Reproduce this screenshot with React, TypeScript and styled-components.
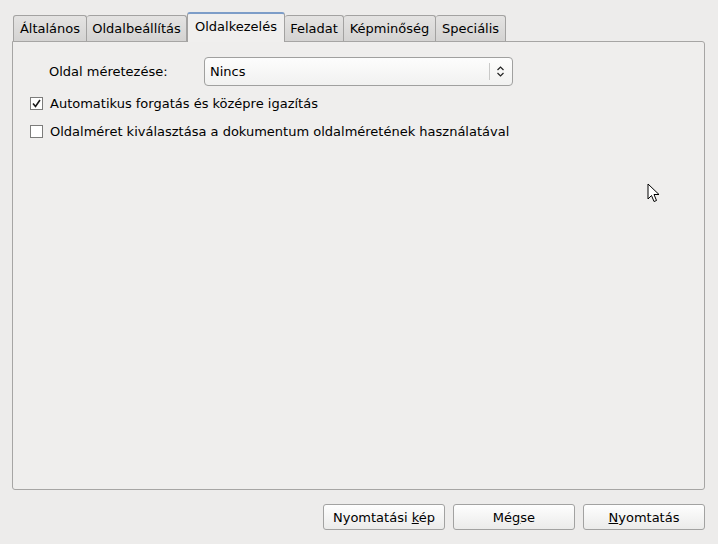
import React from "react";
import styled, { createGlobalStyle, css } from "styled-components";

const GlobalStyle = createGlobalStyle`
  html, body {
    margin: 0;
    padding: 0;
    background: #edeceb;
  }
  body {
    font-family: "DejaVu Sans", "Noto Sans", sans-serif;
    font-size: 13px;
    color: #000;
  }
`;

const Window = styled.div`
  position: relative;
  box-sizing: border-box;
  width: 718px;
  height: 544px;
  padding: 12px 13px 14px 12px;
  display: flex;
  flex-direction: column;
  background: #edeceb;
  overflow: hidden;
`;

const TabBar = styled.div`
  display: flex;
  align-items: flex-end;
  height: 29px;
  padding-left: 1px;
  position: relative;
  z-index: 1;
`;

const Tab = styled.div<{ $active?: boolean; $width: number }>`
  box-sizing: border-box;
  width: ${(p) => p.$width}px;
  height: 26px;
  display: flex;
  align-items: center;
  justify-content: center;
  border: 1px solid #a3a2a1;
  border-left: none;
  border-bottom: none;
  border-radius: 3px 3px 0 0;
  background: linear-gradient(#e4e3e2, #d4d3d2);
  white-space: nowrap;

  &:first-child {
    border-left: 1px solid #a3a2a1;
  }

  ${(p) =>
    p.$active &&
    css`
      height: 30px;
      margin-bottom: -1px;
      padding-bottom: 3px;
      border: 1px solid #a3a2a1;
      border-top: 2px solid #7d9dc8;
      border-bottom: none;
      background: #f0efee;
    `}
`;

const Panel = styled.div`
  flex: 1;
  border: 1px solid #a6a5a4;
  border-radius: 0 3px 3px 3px;
  background: #efeeed;
  padding: 15px 0 0 17px;
  display: flex;
  flex-direction: column;
`;

const FieldRow = styled.div`
  display: flex;
  align-items: center;
  height: 29px;
  margin-bottom: 3px;
`;

const FieldLabel = styled.span`
  width: 155px;
  padding-left: 19px;
`;

const Combo = styled.div`
  box-sizing: border-box;
  width: 309px;
  height: 29px;
  display: flex;
  align-items: center;
  border: 1px solid #a0a09f;
  border-radius: 4px;
  background: linear-gradient(#fdfdfd, #f1f1f0);
  padding-left: 5px;
`;

const ComboText = styled.span`
  flex: 1;
`;

const ComboSep = styled.span`
  width: 1px;
  height: 17px;
  background: #c9c9c8;
  margin-right: 6px;
`;

const ComboArrow = styled.svg`
  width: 9px;
  height: 13px;
  margin-right: 7px;
`;

const CheckRow = styled.label`
  display: flex;
  align-items: center;
  height: 28px;
  gap: 7px;
`;

const Box = styled.span`
  box-sizing: border-box;
  width: 13px;
  height: 13px;
  border: 1px solid #7c7c7b;
  background: #fff;
  display: flex;
  align-items: center;
  justify-content: center;
`;

const Buttons = styled.div`
  display: flex;
  justify-content: flex-end;
  gap: 8px;
  margin-top: 14px;
`;

const Button = styled.button`
  box-sizing: border-box;
  width: 122px;
  height: 26px;
  border: 1px solid #a2a2a1;
  border-radius: 3px;
  background: linear-gradient(#fefefe, #ebebea);
  font: inherit;
  color: #000;
  padding: 0;
`;

const Cursor = styled.svg`
  position: absolute;
  left: 647px;
  top: 183px;
  width: 13px;
  height: 21px;
`;

function Check({ checked }: { checked?: boolean }) {
  return (
    <Box>
      {checked && (
        <svg width="9" height="9" viewBox="0 0 9 9">
          <path d="M1 4.5 L3.5 7.5 L8 1" fill="none" stroke="#1a1a1a" strokeWidth="1.6" />
        </svg>
      )}
    </Box>
  );
}

const tabs = [
  { label: "Általános", width: 74 },
  { label: "Oldalbeállítás", width: 100 },
  { label: "Oldalkezelés", width: 98 },
  { label: "Feladat", width: 59 },
  { label: "Képminőség", width: 92 },
  { label: "Speciális", width: 70 },
];

export default function App() {
  return (
    <Window>
      <GlobalStyle />
      <TabBar>
        {tabs.map((t) => (
          <Tab key={t.label} $width={t.width} $active={t.label === "Oldalkezelés"}>
            {t.label}
          </Tab>
        ))}
      </TabBar>
      <Panel>
        <FieldRow>
          <FieldLabel>Oldal méretezése:</FieldLabel>
          <Combo>
            <ComboText>Nincs</ComboText>
            <ComboSep />
            <ComboArrow viewBox="0 0 9 13">
              <path d="M1.5 5 L4.5 2 L7.5 5 M1.5 8 L4.5 11 L7.5 8" fill="none" stroke="#222" strokeWidth="1.2" />
            </ComboArrow>
          </Combo>
        </FieldRow>
        <CheckRow>
          <Check checked />
          Automatikus forgatás és középre igazítás
        </CheckRow>
        <CheckRow>
          <Check />
          Oldalméret kiválasztása a dokumentum oldalméretének használatával
        </CheckRow>
      </Panel>
      <Buttons>
        <Button>
          Nyomtatási <u>k</u>ép
        </Button>
        <Button>
          Mé<u>g</u>se
        </Button>
        <Button>
          <u>N</u>yomtatás
        </Button>
      </Buttons>
      <Cursor viewBox="0 0 13 21">
        <path d="M1 1 L1 16 L4.5 12.5 L7 18.5 L9.5 17.5 L7 11.5 L12 11.5 Z" fill="#fff" stroke="#000" strokeWidth="1" strokeLinejoin="round" />
      </Cursor>
    </Window>
  );
}
